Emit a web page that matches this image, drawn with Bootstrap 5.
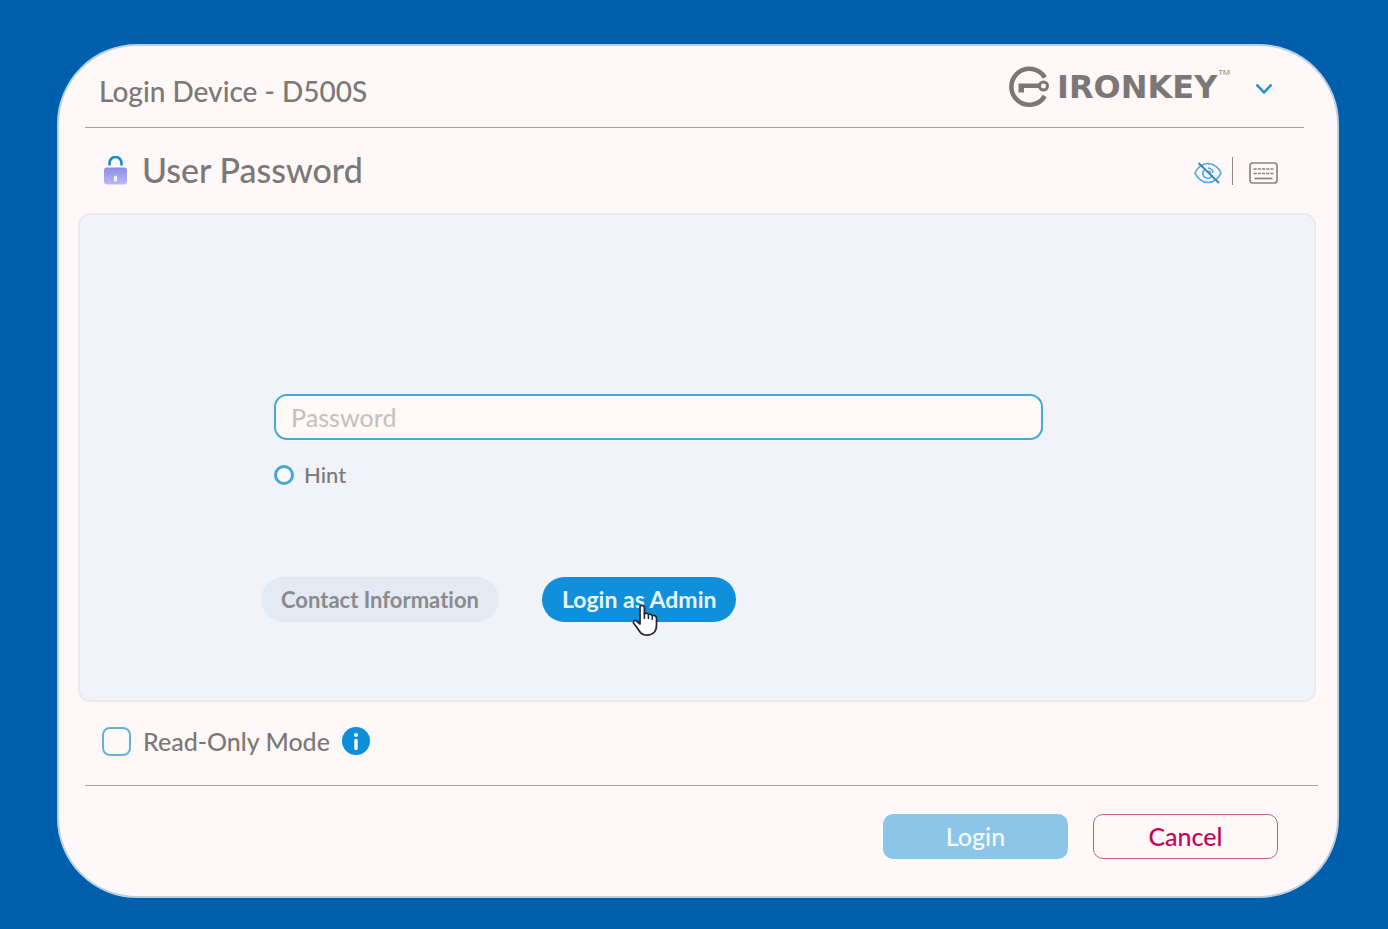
<!DOCTYPE html>
<html lang="en">
<head>
<meta charset="utf-8">
<meta name="viewport" content="width=device-width, initial-scale=1">
<title>Login Device - D500S</title>
<link href="https://cdn.jsdelivr.net/npm/bootstrap@5.3.0/dist/css/bootstrap.min.css" rel="stylesheet">
<style>
  :root { --ik-blue: #0c8edb; --ik-line: #43a9d6; --ik-text: #7b7877; --ik-rule: #a5a1a0; --ik-paper: #fef9f8; }
  body { background: #005fac; color: var(--ik-text); font-family: Lato, "Open Sans", sans-serif; font-weight: 500; padding: 44px 49px 32px 57px; }
  .device-window { background: var(--ik-paper); border: 2px solid #b9cfe4; border-radius: 80px; padding: 0 19px; }
  .window-head { height: 82px; margin: 0 14px 0 7px; padding: 0 31px 0 14px; border-bottom: 1px solid var(--ik-rule); }
  .window-title { font-size: 28px; line-height: 32px; font-weight: 500; padding-top: 9px; }
  .brand-word { font: 700 32px/36px "DejaVu Sans", sans-serif; color: #7c7776; margin-left: 8px; }
  .brand-tm { font: 400 8px/12px "Open Sans", sans-serif; margin: 0 25px 0 1px; }
  .section-head { height: 85px; padding: 0 40px 0 26px; }
  .section-title { font-size: 34px; line-height: 40px; font-weight: 500; padding-bottom: 2px; margin-left: 15px; }
  .plain { background: none; border: 0; padding: 0; line-height: 0; }
  .tool-icon { padding-top: 4px; }
  .split-bar { width: 1px; height: 28px; margin: 0 16px 0 10px; background: #8d8987; }
  .login-panel { background: #f1f3f9; border: 2px solid #ebe9ed; border-radius: 12px; margin-right: 2px; padding: 179px 271px 78px 181px; }
  .login-panel .form-control { height: 46px; margin-left: 13px; width: calc(100% - 13px); border: 2px solid var(--ik-line); border-radius: 13px; background: #fffaf8; padding: 0 15px; font-size: 25px; font-weight: 500; box-shadow: none; }
  .form-control::placeholder { color: #c8c1c1; }
  .hint-row { margin: 19px 0 0 13px; gap: 10px; font-size: 22px; line-height: 32px; }
  .hint-row input { appearance: none; width: 20px; height: 20px; margin: 0; border: 3px solid var(--ik-line); border-radius: 50%; background: var(--ik-paper); }
  .action-row { margin-top: 86px; gap: 43px; }
  .pill { height: 45px; border-radius: 23px; border: 0; padding: 0 20px; font-size: 22px; line-height: 32px; font-weight: 700; font-variant-ligatures: none; }
  .pill-soft, .pill-soft:hover { background: #e3eaf4; color: #8b8b8e; }
  .pill-main, .pill-main:hover { background: #108fdb; color: #e6f4fd; font-size: 23px; padding: 0 20px 2px; }
  .pointer { left: 90px; top: 27px; pointer-events: none; }
  .mode-row { height: 84px; margin: 0 0 0 7px; padding: 0 17px 5px; gap: 12px; border-bottom: 1px solid var(--ik-rule); font-size: 25px; line-height: 32px; }
  .mode-row input { appearance: none; width: 29px; height: 29px; margin: 0; border: 2px solid #69b1dc; border-radius: 8px; background: var(--ik-paper); }
  .foot-row { height: 110px; padding: 28px 40px 0 0; gap: 25px; }
  .foot-row .btn { width: 185px; height: 45px; padding: 0 0 2px; font-size: 25px; line-height: 32px; font-weight: 500; border-radius: 10px; }
  .btn-go, .btn-go:hover { background: #8bc6e9; border: 0; color: #f7fafd; }
  .btn-stop, .btn-stop:hover { background: var(--ik-paper); border: 1px solid #c75c83; color: #c4045a; }
</style>
</head>
<body>
<main class="device-window">
  <header class="window-head d-flex justify-content-between align-items-center">
    <h1 class="window-title m-0">Login Device - D500S</h1>
    <div class="d-flex align-items-center">
      <svg width="40" height="42" viewBox="0 0 40 42" fill="none" stroke="#7c7776" aria-hidden="true">
        <path d="M35.800 11.500A18 18 0 1 0 35.800 30" stroke-width="4.600"/>
        <path d="M9.500 17.500H31V22H15V26.500H9.500Z" fill="#7c7776" stroke="none"/>
        <circle cx="34.500" cy="20" r="4" stroke-width="3"/>
      </svg>
      <span class="brand-word">IRONKEY</span><span class="brand-tm align-self-start">TM</span>
      <button class="plain pt-1" type="button" aria-label="Menu"><svg width="18" height="12" viewBox="0 0 18 12" fill="none" stroke="#168fd4" stroke-width="2.500"><path d="M1.500 1.500L9 9.500L16.500 1.500"/></svg></button>
    </div>
  </header>

  <section class="section-head d-flex justify-content-between align-items-center">
    <div class="d-flex align-items-center">
      <svg width="23" height="29" viewBox="0 0 23 29" aria-hidden="true">
        <defs><linearGradient id="lockFill" x1="0" y1="0" x2="0" y2="1"><stop stop-color="#8c8ce8"/><stop offset="1" stop-color="#b9b9fb"/></linearGradient></defs>
        <path d="M5.500 9.500V7a6 6 0 0 1 12 0v2.500" fill="none" stroke="#1189cb" stroke-width="2.500"/>
        <rect y="11.500" width="23" height="17" rx="3" fill="url(#lockFill)"/><rect x="10" y="19.500" width="3" height="6" rx="1.500" fill="#f4f5ff"/>
      </svg>
      <h2 class="section-title mb-0">User Password</h2>
    </div>
    <div class="d-flex align-items-center">
      <button class="plain tool-icon" type="button" aria-label="Show password"><svg width="28" height="24" viewBox="0 0 28 24" fill="none" stroke="#56a9e0" stroke-width="1.700"><path d="M1 12C3 7 8 2.500 14 2.500S25 7 27 12C25 17 20 21.500 14 21.500S3 17 1 12Z"/><path d="M10 9a5 5 0 1 0 8.500 5M14 7a5 5 0 0 1 5 5M14.500 9.800q2 .5 2 2.700"/><path d="M4.500 2L25 22" stroke-width="2" stroke="#3489ce"/></svg></button>
      <span class="split-bar"></span>
      <button class="plain tool-icon" type="button" aria-label="On-screen keyboard"><svg width="29" height="22" viewBox="0 0 29 22" fill="none" stroke="#8a8585" stroke-width="1.700"><rect x="1" y="1" width="27" height="20" rx="2.500"/><path d="M4.500 7h20M4.500 11.500h20" stroke-dasharray="3.200 1"/><path d="M5.500 16.500h18"/></svg></button>
    </div>
  </section>

  <form>
    <section class="login-panel">
      <input class="form-control" type="password" placeholder="Password" aria-label="Password">
      <div class="hint-row d-flex align-items-center"><input type="radio" id="hint"><label for="hint">Hint</label></div>
      <div class="action-row d-flex">
        <button class="btn pill pill-soft" type="button">Contact Information</button>
        <div class="position-relative">
          <button class="btn pill pill-main" type="button">Login as Admin</button>
          <svg class="pointer position-absolute" width="27" height="33" viewBox="0 0 27 33" aria-hidden="true"><path d="M8 17V3.500a2.200 2.200 0 0 1 4.400 0V10q2-1.800 4 .5q2-1.300 3.800 1q3.800-.8 4.300 2.500V21q0 5-2.500 7.500q-3 3-9 2.500q-4-.5-7-6L1.500 19q-.5-3 2.500-2.500L8 20Z" fill="#fff" stroke="#27242f" stroke-width="1.700" stroke-linejoin="round"/><path d="M12.400 9v6M16.400 10.500V15M20.300 11.500V16" stroke="#27242f" stroke-width="1.500"/></svg>
        </div>
      </div>
    </section>

    <div class="mode-row d-flex align-items-center">
      <input type="checkbox" id="readonly"><label for="readonly">Read-Only Mode</label>
      <button class="plain" type="button" aria-label="About read-only mode"><svg width="28" height="28" viewBox="0 0 28 28"><circle cx="14" cy="14" r="14" fill="#0c8edb"/><circle cx="14" cy="8" r="2" fill="#fff"/><rect x="12.300" y="12" width="3.400" height="11" rx="1" fill="#fff"/></svg></button>
    </div>

    <div class="foot-row d-flex justify-content-end">
      <button class="btn btn-go" type="submit">Login</button>
      <button class="btn btn-stop" type="button">Cancel</button>
    </div>
  </form>
</main>
<script src="https://cdn.jsdelivr.net/npm/bootstrap@5.3.0/dist/js/bootstrap.bundle.min.js"></script>
</body>
</html>
